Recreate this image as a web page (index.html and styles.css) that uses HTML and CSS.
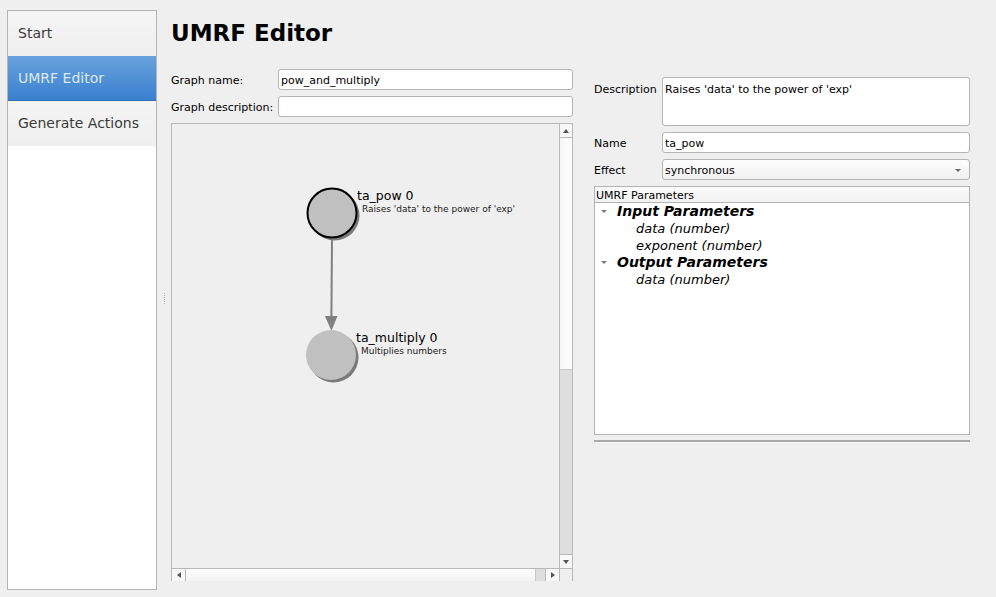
FILE: index.html
```html
<!DOCTYPE html>
<html lang="en">
<head>
	<meta charset="UTF-8" />
	<title>UMRF Editor</title>
	<link rel="stylesheet" href="styles.css">
</head>
<body>
	<div class="window">
		<ul class="nav">
			<li>Start</li>
			<li class="active">UMRF Editor</li>
			<li>Generate Actions</li>
		</ul>
		<div class="grip"><span></span><span></span><span></span><span></span><span></span><span></span></div>
		<div class="main">
			<h1>UMRF Editor</h1>
			<div class="columns">
				<div class="graph">
					<div class="row">
						<label>Graph name:</label>
						<div class="field">pow_and_multiply</div>
					</div>
					<div class="row">
						<label>Graph description:</label>
						<div class="field"></div>
					</div>
					<div class="canvas">
						<div class="view">
							<svg width="387" height="444" viewBox="0 0 387 444">
								<!-- edge -->
								<line x1="160" y1="114" x2="159.4" y2="193" stroke="#808080" stroke-width="2"/>
								<polygon points="153,192 165.5,192 159.4,207" fill="#808080"/>
								<!-- ta_pow -->
								<circle cx="162.5" cy="91.5" r="25" fill="#7a7a7a"/>
								<circle cx="160" cy="89" r="24.5" fill="#c0c0c0" stroke="#000" stroke-width="2"/>
								<text x="185" y="76" class="nodeName">ta_pow 0</text>
								<text x="190" y="88" class="nodeDesc">Raises 'data' to the power of 'exp'</text>
								<!-- ta_multiply -->
								<circle cx="161.5" cy="233.5" r="25" fill="#7a7a7a"/>
								<circle cx="159" cy="231" r="25" fill="#c0c0c0"/>
								<text x="184" y="218" class="nodeName">ta_multiply 0</text>
								<text x="189" y="230" class="nodeDesc">Multiplies numbers</text>
							</svg>
						</div>
						<div class="vbar">
							<div class="btn"><i class="up"></i></div>
							<div class="handle"></div>
							<div class="trough"></div>
							<div class="btn"><i class="down"></i></div>
						</div>
						<div class="hbar">
							<div class="btn"><i class="left"></i></div>
							<div class="handle"></div>
							<div class="trough"></div>
							<div class="btn"><i class="right"></i></div>
						</div>
						<div class="corner"></div>
					</div>
				</div>
				<div class="props">
					<div class="row">
						<label>Description</label>
						<div class="field area">Raises 'data' to the power of 'exp'</div>
					</div>
					<div class="row">
						<label>Name</label>
						<div class="field">ta_pow</div>
					</div>
					<div class="row">
						<label>Effect</label>
						<div class="field combo">synchronous<i></i></div>
					</div>
					<div class="tree">
						<div class="treeHead">UMRF Parameters</div>
						<div class="item top"><i></i>Input Parameters</div>
						<div class="item">data (number)</div>
						<div class="item">exponent (number)</div>
						<div class="item top"><i></i>Output Parameters</div>
						<div class="item">data (number)</div>
					</div>
					<div class="sep"></div>
				</div>
			</div>
		</div>
	</div>
</body>
</html>
```

FILE: styles.css
```css
body,ul,li,h1,label {
	margin: 0;
	padding: 0;
}
body {
	background: #efefef;
	font-family: "DejaVu Sans", "Noto Sans", sans-serif;
	color: #000;
}
.window {
	display: flex;
	padding: 10px 0 0 7px;
	height: 597px;
	box-sizing: border-box;
}
/* left navigation list */
.nav {
	list-style: none;
	width: 148px;
	height: 578px;
	border: 1px solid #b5b5b5;
	background: #fff;
}
.nav li {
	height: 45px;
	line-height: 45px;
	padding-left: 10px;
	font-size: 14px;
	color: #3a3a3a;
	background: linear-gradient(#f5f5f5, #efefef);
}
.nav li.active {
	color: #dde8f6;
	background: linear-gradient(#68a2dc, #3a80cf);
	border-bottom: 1px solid #2f6db3;
	height: 44px;
}
.grip {
	width: 14px;
	display: flex;
	flex-direction: column;
	align-items: center;
	justify-content: center;
	gap: 1px;
	padding-bottom: 10px;
}
.grip span {
	width: 1px;
	height: 1px;
	background: #b0b0b0;
}
.main {
	flex: 1;
}
h1 {
	font-size: 23px;
	font-weight: bold;
	height: 30px;
	line-height: 30px;
	margin-top: 8px;
}
.columns {
	display: flex;
	gap: 21px;
	margin-top: 21px;
}
.row {
	display: flex;
	align-items: center;
	margin-bottom: 6px;
}
.row label {
	font-size: 11px;
	width: 107px;
	padding-top: 1px;
}
.field {
	flex: 1;
	height: 19px;
	line-height: 21px;
	border: 1px solid #b4b4b4;
	border-radius: 3px;
	background: #fff;
	font-size: 11px;
	padding-left: 2px;
}
/* graph side */
.graph {
	width: 402px;
}
.canvas {
	display: grid;
	grid-template-columns: 387px 13px;
	grid-template-rows: 444px 13px;
	border: 1px solid #b8b8b8;
	height: 458px;
	width: 402px;
	box-sizing: border-box;
	background: #efefef;
}
.view {
	overflow: hidden;
}
.view svg {
	display: block;
}
.nodeName {
	font-size: 12.5px;
	fill: #000;
}
.nodeDesc {
	font-size: 9px;
	fill: #222;
}
.vbar {
	display: flex;
	flex-direction: column;
	border-left: 1px solid #b8b8b8;
}
.hbar {
	display: flex;
	border-top: 1px solid #b8b8b8;
}
.btn {
	width: 13px;
	height: 13px;
	background: #f8f8f8;
	display: flex;
	align-items: center;
	justify-content: center;
	flex: none;
}
.vbar .btn {
	width: 12px;
}
.vbar .btn:first-child {
	border-bottom: 1px solid #b8b8b8;
}
.vbar .btn:last-child {
	border-top: 1px solid #b8b8b8;
}
.hbar .btn {
	height: 12px;
}
.hbar .btn:first-child {
	border-right: 1px solid #b8b8b8;
}
.hbar .btn:last-child {
	border-left: 1px solid #b8b8b8;
}
.vbar .handle {
	height: 231px;
	background: linear-gradient(90deg, #f6f6f6, #fdfdfd);
	border-bottom: 1px solid #c8c8c8;
}
.vbar .trough {
	flex: 1;
	background: #dedede;
}
.hbar .handle {
	width: 349px;
	background: linear-gradient(#fdfdfd, #f3f3f3);
	border-right: 1px solid #c8c8c8;
}
.hbar .trough {
	flex: 1;
	background: #dedede;
}
.corner {
	border-top: 1px solid #b8b8b8;
	border-left: 1px solid #b8b8b8;
	background: #efefef;
}
.btn i {
	width: 0;
	height: 0;
	border: 3px solid transparent;
}
.btn .up {
	border-bottom: 4px solid #555;
	border-top: 0;
}
.btn .down {
	border-top: 4px solid #555;
	border-bottom: 0;
}
.btn .left {
	border-right: 4px solid #555;
	border-left: 0;
}
.btn .right {
	border-left: 4px solid #555;
	border-right: 0;
}
/* properties side */
.props {
	width: 376px;
	margin-top: 8px;
}
.props .row {
	align-items: flex-start;
}
.props .row label {
	width: 68px;
	padding-top: 2px;
	line-height: 19px;
}
.props .row:first-child label {
	line-height: 21px;
}
.field.area {
	height: 47px;
	line-height: 23px;
}
.field.combo {
	position: relative;
	background: linear-gradient(#fdfdfd, #f1f1f1);
	padding-left: 4px;
}
.field.combo i {
	position: absolute;
	right: 8px;
	top: 9px;
	border: 3px solid transparent;
	border-top: 3px solid #666;
	border-bottom: 0;
}
.props .field {
	padding-left: 2px;
}
.tree {
	height: 247px;
	border: 1px solid #b4b4b4;
	background: #fff;
}
.treeHead {
	height: 15px;
	line-height: 17px;
	font-size: 11px;
	padding-left: 1px;
	border-bottom: 1px solid #b4b4b4;
	background: linear-gradient(#fbfbfb, #f2f2f2);
}
.item {
	height: 17px;
	line-height: 17px;
	font-size: 13px;
	font-style: italic;
	padding-left: 41px;
}
.item.top {
	font-weight: bold;
	font-size: 14px;
	padding-left: 22px;
	position: relative;
}
.item.top i {
	position: absolute;
	left: 6px;
	top: 7px;
	border: 3px solid transparent;
	border-top: 3px solid #777;
	border-bottom: 0;
}
.sep {
	margin-top: 5px;
	height: 2px;
	background: #a8a8a8;
	border-bottom: 1px solid #f6f6f6;
}
```
